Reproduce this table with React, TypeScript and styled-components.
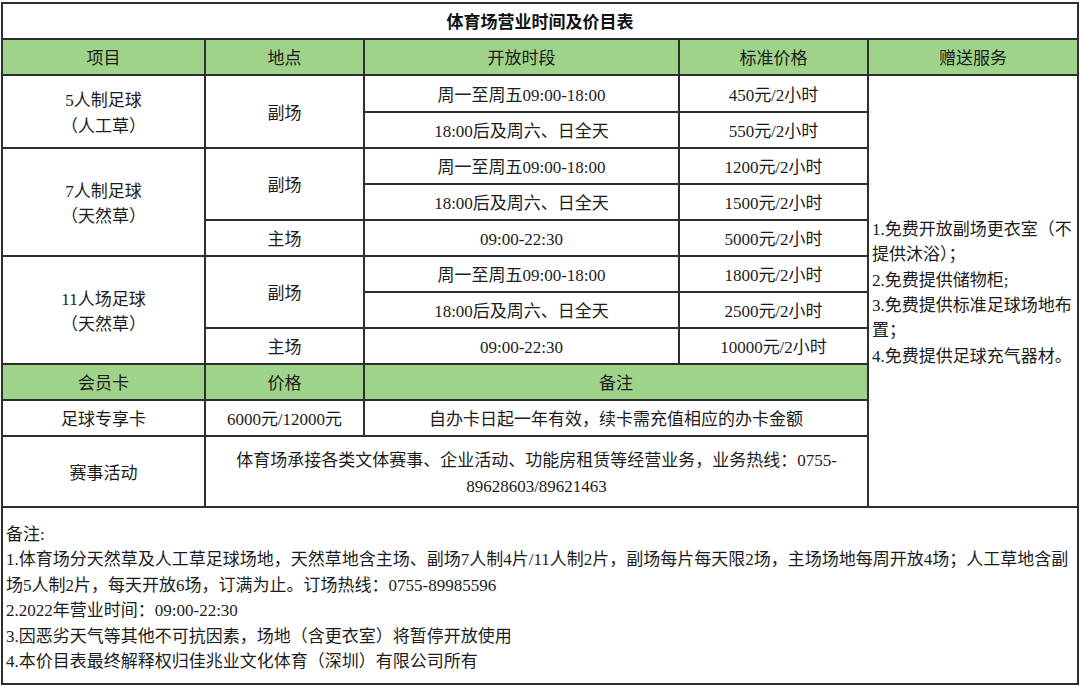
import React from 'react';
import styled, { createGlobalStyle } from 'styled-components';

const GlobalStyle = createGlobalStyle`
  html, body {
    margin: 0;
    padding: 0;
    background: #fff;
  }
  body {
    font-family: 'Liberation Serif', 'Noto Sans CJK SC', serif;
    color: #1c1c1c;
  }
`;

const Page = styled.div`
  width: 1080px;
  height: 686px;
  box-sizing: border-box;
  padding: 2px 0 0 1px;
  overflow: hidden;
`;

const Sheet = styled.div`
  display: grid;
  grid-template-columns: 201px 157px 313px 187px 208px;
  grid-template-rows: 34px 34px 35px 34px 34px 34px 34px 34px 34px 34px 34px 34px 69px 175px;
  gap: 2px;
  padding: 2px;
  width: fit-content;
  background: #2e2e2e;
`;

// area = "rowStart / colStart / rowEnd / colEnd"
const Cell = styled.div<{ $area: string; $head?: boolean }>`
  grid-area: ${(p) => p.$area};
  background: ${(p) => (p.$head ? '#9fd38a' : '#fff')};
  display: flex;
  flex-direction: column;
  justify-content: center;
  align-items: center;
  text-align: center;
  box-sizing: border-box;
  padding-top: 4px;
  font-size: 17px;
  line-height: 25.4px;
  white-space: nowrap;
`;

const TitleCell = styled(Cell)`
  font-family: 'Liberation Sans', 'Noto Sans CJK SC', sans-serif;
  font-weight: 700;
  color: #111;
`;

const ServiceCell = styled(Cell)`
  align-items: flex-start;
  text-align: left;
  padding-left: 3px;
`;

const NoteCell = styled(Cell)`
  justify-content: flex-start;
  align-items: flex-start;
  text-align: left;
  padding: 14px 0 0 3px;
`;

const slots = [
  ['周一至周五09:00-18:00', '450元/2小时'],
  ['18:00后及周六、日全天', '550元/2小时'],
  ['周一至周五09:00-18:00', '1200元/2小时'],
  ['18:00后及周六、日全天', '1500元/2小时'],
  ['09:00-22:30', '5000元/2小时'],
  ['周一至周五09:00-18:00', '1800元/2小时'],
  ['18:00后及周六、日全天', '2500元/2小时'],
  ['09:00-22:30', '10000元/2小时'],
];

const items = [
  { lines: ['5人制足球', '（人工草）'], from: 3, to: 5 },
  { lines: ['7人制足球', '（天然草）'], from: 5, to: 8 },
  { lines: ['11人场足球', '（天然草）'], from: 8, to: 11 },
];

const sites = [
  { name: '副场', from: 3, to: 5 },
  { name: '副场', from: 5, to: 7 },
  { name: '主场', from: 7, to: 8 },
  { name: '副场', from: 8, to: 10 },
  { name: '主场', from: 10, to: 11 },
];

const services = [
  '1.免费开放副场更衣室（不',
  '提供沐浴）；',
  '2.免费提供储物柜;',
  '3.免费提供标准足球场地布',
  '置；',
  '4.免费提供足球充气器材。',
];

const notes = [
  '备注:',
  '1.体育场分天然草及人工草足球场地，天然草地含主场、副场7人制4片/11人制2片，副场每片每天限2场，主场场地每周开放4场；人工草地含副',
  '场5人制2片，每天开放6场，订满为止。订场热线：0755-89985596',
  '2.2022年营业时间：09:00-22:30',
  '3.因恶劣天气等其他不可抗因素，场地（含更衣室）将暂停开放使用',
  '4.本价目表最终解释权归佳兆业文化体育（深圳）有限公司所有',
];

export default function App() {
  return (
    <>
      <GlobalStyle />
      <Page>
        <Sheet>
          <TitleCell $area="1 / 1 / 2 / 6">体育场营业时间及价目表</TitleCell>

          <Cell $area="2 / 1 / 3 / 2" $head>项目</Cell>
          <Cell $area="2 / 2 / 3 / 3" $head>地点</Cell>
          <Cell $area="2 / 3 / 3 / 4" $head>开放时段</Cell>
          <Cell $area="2 / 4 / 3 / 5" $head>标准价格</Cell>
          <Cell $area="2 / 5 / 3 / 6" $head>赠送服务</Cell>

          {items.map((it) => (
            <Cell key={it.from} $area={`${it.from} / 1 / ${it.to} / 2`}>
              {it.lines.map((l) => (
                <span key={l}>{l}</span>
              ))}
            </Cell>
          ))}

          {sites.map((s) => (
            <Cell key={s.from} $area={`${s.from} / 2 / ${s.to} / 3`}>
              {s.name}
            </Cell>
          ))}

          {slots.map(([time, price], i) => (
            <React.Fragment key={i}>
              <Cell $area={`${i + 3} / 3 / ${i + 4} / 4`}>{time}</Cell>
              <Cell $area={`${i + 3} / 4 / ${i + 4} / 5`}>{price}</Cell>
            </React.Fragment>
          ))}

          <ServiceCell $area="3 / 5 / 14 / 6">
            {services.map((l) => (
              <span key={l}>{l}</span>
            ))}
          </ServiceCell>

          <Cell $area="11 / 1 / 12 / 2" $head>会员卡</Cell>
          <Cell $area="11 / 2 / 12 / 3" $head>价格</Cell>
          <Cell $area="11 / 3 / 12 / 5" $head>备注</Cell>

          <Cell $area="12 / 1 / 13 / 2">足球专享卡</Cell>
          <Cell $area="12 / 2 / 13 / 3">6000元/12000元</Cell>
          <Cell $area="12 / 3 / 13 / 5">自办卡日起一年有效，续卡需充值相应的办卡金额</Cell>

          <Cell $area="13 / 1 / 14 / 2">赛事活动</Cell>
          <Cell $area="13 / 2 / 14 / 5">
            <span>体育场承接各类文体赛事、企业活动、功能房租赁等经营业务，业务热线：0755-</span>
            <span>89628603/89621463</span>
          </Cell>

          <NoteCell $area="14 / 1 / 15 / 6">
            {notes.map((l) => (
              <span key={l}>{l}</span>
            ))}
          </NoteCell>
        </Sheet>
      </Page>
    </>
  );
}
